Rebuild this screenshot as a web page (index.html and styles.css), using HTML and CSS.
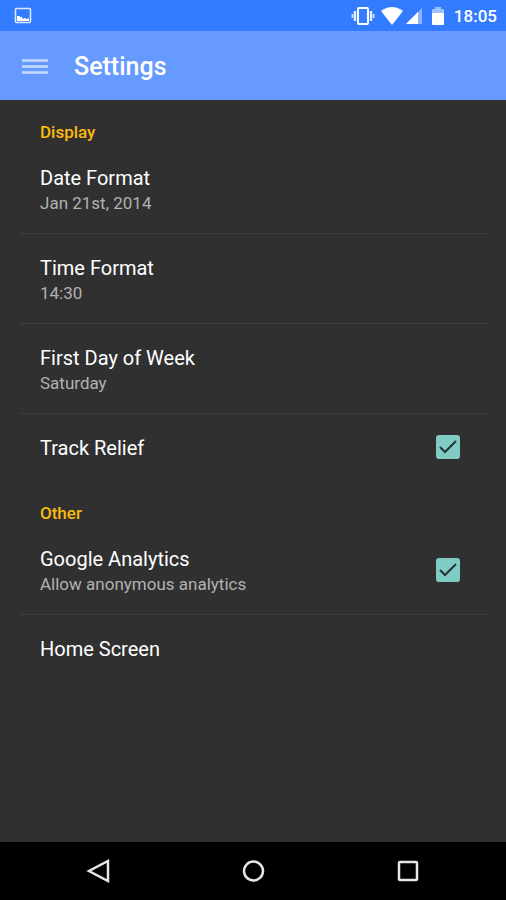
FILE: index.html
```html
<!DOCTYPE html>
<html lang="en">
<head>
  <meta charset="UTF-8" />
  <title>Settings</title>
  <meta name="viewport" content="width=device-width, initial-scale=1" />
  <link rel="stylesheet" href="styles.css">
</head>
<body>
  <div class="status-bar">
    <svg width="18" height="18" viewBox="0 0 18 18">
      <rect x="1.5" y="1.5" width="15" height="14" rx="1" fill="none" stroke="#d9e6ff" stroke-width="1.6" />
      <path d="M3 14V9h3v1h2l1 2 2-1 2 1 2-1v3z" fill="#fff" />
    </svg>
    <div class="status-right">
      <svg class="vibrate" width="24" height="20" viewBox="0 0 24 20">
        <rect x="7" y="2" width="10" height="16" rx="1" fill="none" stroke="#fff" stroke-width="2" />
        <path d="M4 5v10M20 5v10" stroke="#e3edff" stroke-width="2.4" />
        <path d="M1.5 8v4M22.5 8v4" stroke="#c4d9ff" stroke-width="2" />
      </svg>
      <svg class="wifi" width="22" height="18" viewBox="0 0 22 18">
        <path d="M0 4Q11-4 22 4L11 18z" fill="#fff" />
      </svg>
      <svg class="signal" width="18" height="18" viewBox="0 0 18 18">
        <path d="M17 1v16H1z" fill="#8db5ff" />
        <path d="M13 5v12H1z" fill="#fff" />
      </svg>
      <svg class="battery" width="12" height="18" viewBox="0 0 12 18">
        <path d="M3 0h6v2h2q1 0 1 1v4H0V3q0-1 1-1h2z" fill="#9dc0ff" />
        <path d="M0 6h12v11q0 1-1 1H1q-1 0-1-1z" fill="#fff" />
      </svg>
      <span class="clock">18:05</span>
    </div>
  </div>

  <header class="toolbar">
    <button class="menu-btn" type="button" aria-label="Menu">
      <svg width="26" height="18" viewBox="0 0 26 18">
        <path d="M0 2.5h26M0 8.5h26M0 14.5h26" stroke="#c8dbff" stroke-width="2.6" />
      </svg>
    </button>
    <h1>Settings</h1>
  </header>

  <main class="settings">
    <h2>Display</h2>
    <button class="row divided" type="button">
      <span class="text">
        <span class="title">Date Format</span>
        <span class="summary">Jan 21st, 2014</span>
      </span>
    </button>
    <button class="row divided" type="button">
      <span class="text">
        <span class="title">Time Format</span>
        <span class="summary">14:30</span>
      </span>
    </button>
    <button class="row divided" type="button">
      <span class="text">
        <span class="title">First Day of Week</span>
        <span class="summary">Saturday</span>
      </span>
    </button>
    <label class="row" for="relief">
      <span class="title">Track Relief</span>
      <span class="check">
        <input type="checkbox" id="relief" checked />
        <svg viewBox="0 0 24 24"><path d="M4 12l5 5L20 6" /></svg>
      </span>
    </label>

    <h2>Other</h2>
    <label class="row divided" for="analytics">
      <span class="text">
        <span class="title">Google Analytics</span>
        <span class="summary">Allow anonymous analytics</span>
      </span>
      <span class="check">
        <input type="checkbox" id="analytics" checked />
        <svg viewBox="0 0 24 24"><path d="M4 12l5 5L20 6" /></svg>
      </span>
    </label>
    <button class="row" type="button">
      <span class="title">Home Screen</span>
    </button>
  </main>

  <nav class="nav-bar">
    <button type="button" aria-label="Back">
      <svg width="24" height="24" viewBox="0 0 24 24"><path d="M22 2v20L3 12z" /></svg>
    </button>
    <button type="button" aria-label="Home">
      <svg width="24" height="24" viewBox="0 0 24 24"><circle cx="12.5" cy="12" r="9.5" /></svg>
    </button>
    <button type="button" aria-label="Recent apps">
      <svg width="24" height="24" viewBox="0 0 24 24"><rect x="3" y="3" width="18" height="18" rx="1" /></svg>
    </button>
  </nav>
</body>
</html>
```

FILE: styles.css
```css
* {
  box-sizing: border-box;
  font-family: Roboto, sans-serif;
}
body {
  margin: 0;
  background: #303030;
  color: #fff;
  display: flex;
  flex-direction: column;
  min-height: 100vh;
}
button {
  border: none;
  background: none;
  color: inherit;
  padding: 0;
  text-align: left;
  cursor: pointer;
}
svg {
  display: block;
}
.status-bar {
  background: #337bff;
  height: 31px;
  padding: 1px 9px 0 14px;
  display: flex;
  align-items: center;
  justify-content: space-between;
}
.status-right {
  display: flex;
  align-items: center;
}
.wifi {
  margin-left: 6px;
}
.signal {
  margin-left: 2px;
}
.battery {
  margin-left: 9px;
}
.clock {
  margin-left: 10px;
  font-size: 17px;
  font-weight: 500;
}
.toolbar {
  background: #669aff;
  height: 69px;
  padding: 2px 22px 0;
  display: flex;
  align-items: center;
  gap: 26px;
}
h1 {
  margin: 0;
  font-size: 25px;
  font-weight: 500;
}
.settings {
  flex: 1;
  padding: 0 18px 0 20px;
}
h2 {
  margin: 0;
  height: 44px;
  padding: 21px 20px 0;
  font-size: 17px;
  line-height: 23px;
  font-weight: 500;
  color: #fbb90f;
}
.row {
  width: 100%;
  padding: 22px 28px 20px 20px;
  display: flex;
  align-items: center;
  justify-content: space-between;
  cursor: pointer;
}
.divided {
  padding-bottom: 17px;
  border-bottom: 1px solid #3e3e3e;
}
.title, .summary {
  display: block;
  line-height: 25px;
}
.title {
  font-size: 20px;
}
.summary {
  font-size: 17px;
  color: #b2b2b2;
}
.check {
  position: relative;
  width: 24px;
  height: 24px;
  margin: -2px 0 2px;
}
.check input {
  appearance: none;
  display: block;
  width: 24px;
  height: 24px;
  margin: 0;
  border: 2px solid #b2b2b2;
  border-radius: 3px;
}
.check input:checked {
  background: #80cbc4;
  border-color: #80cbc4;
}
.check svg {
  position: absolute;
  inset: 0;
  fill: none;
  stroke: #263434;
  stroke-width: 2;
  pointer-events: none;
}
.check input:not(:checked) + svg {
  display: none;
}
.nav-bar {
  background: #000;
  height: 58px;
  padding: 0 21px;
  display: flex;
}
.nav-bar button {
  flex: 1;
  display: flex;
  align-items: center;
  justify-content: center;
}
.nav-bar svg {
  fill: none;
  stroke: #e6e6e6;
  stroke-width: 2.5;
}
```
